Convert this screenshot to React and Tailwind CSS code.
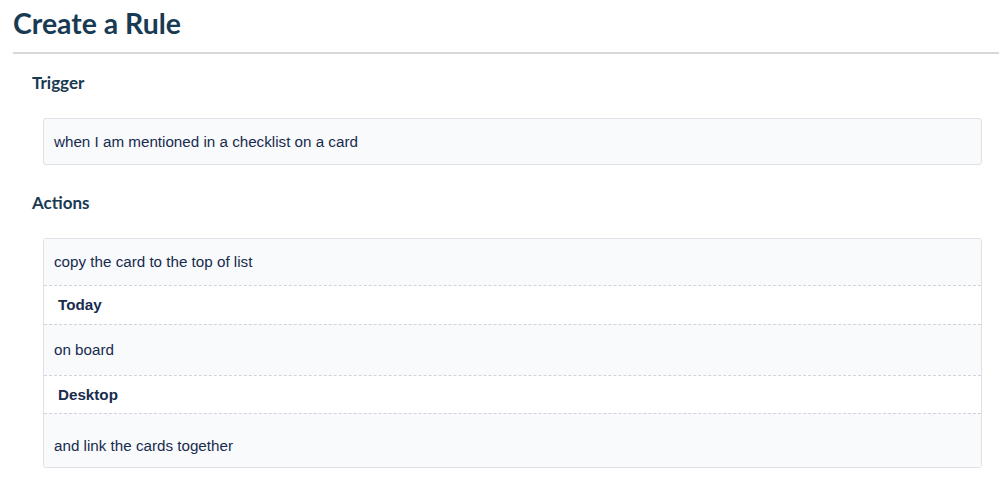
export default function App() {
  const actions = [
    { text: "copy the card to the top of list", bold: false, h: "h-[46px]" },
    { text: "Today", bold: true, h: "h-[39px]" },
    { text: "on board", bold: false, h: "h-[51px]" },
    { text: "Desktop", bold: true, h: "h-[38px]" },
    { text: "and link the cards together", bold: false, h: "h-[54px] pt-[10px]" },
  ];

  return (
    <div className="w-[999px] h-[481px] bg-white text-[#172b4d] overflow-hidden">
      <div className="pl-[13px]">
        <h1 className="font-['Lato',sans-serif] font-bold text-[28.4px] leading-none pt-[9px] pb-[15px] text-[#183a52]">
          Create a Rule
        </h1>
        <div className="border-t-2 border-[#d8d8d8]" />
      </div>

      <div className="pl-[32px] pr-[17px]">
        <h2 className="font-['Lato',sans-serif] font-bold text-[17px] leading-none pt-[20px] pb-[27px] text-[#183a52]">
          Trigger
        </h2>
        <div className="ml-[11px] h-[47px] flex items-center px-[10px] bg-[#f9fafc] border border-[#dfe1e6] rounded-[3px] font-['Liberation_Sans',Arial,sans-serif] text-[15.2px]">
          when I am mentioned in a checklist on a card
        </div>

        <h2 className="font-['Lato',sans-serif] font-bold text-[17px] leading-none pt-[29px] pb-[27px] text-[#183a52]">
          Actions
        </h2>
        <div className="ml-[11px] border border-[#dfe1e6] rounded-[3px] overflow-hidden font-['Liberation_Sans',Arial,sans-serif] text-[15.2px]">
          {actions.map((a, i) => (
            <div
              key={i}
              className={
                (a.bold ? "bg-white font-bold pl-[14px] " : "bg-[#f9fafc] pl-[10px] ") +
                (i > 0 ? "border-t border-dashed border-[#cfd3da] " : "") +
                a.h +
                " flex items-center"
              }
            >
              {a.text}
            </div>
          ))}
        </div>
      </div>
    </div>
  );
}
